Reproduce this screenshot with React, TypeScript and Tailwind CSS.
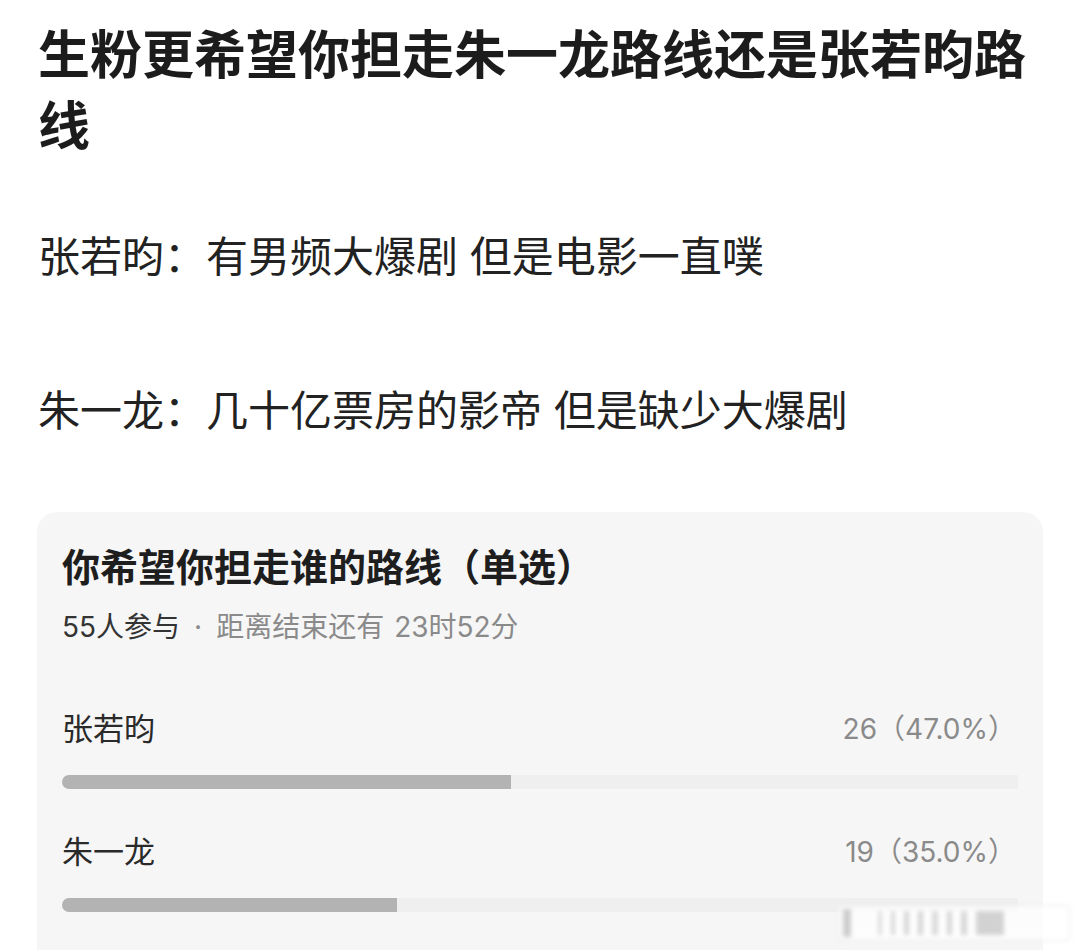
const options = [
  { name: "张若昀", votes: 26, pct: 47.0 },
  { name: "朱一龙", votes: 19, pct: 35.0 },
];

export default function App() {
  return (
    <div
      className="relative min-h-screen bg-white px-[38px] pt-[20px] pb-[40px] text-[#222]"
      style={{ fontFamily: 'Inter, "Noto Sans CJK SC", "Noto Sans", sans-serif' }}
    >
      {/* 标题 */}
      <h1 className="text-[52px] leading-[71px] font-bold text-[#1c1c1c]">
        生粉更希望你担走朱一龙路线还是张若昀路线
      </h1>

      {/* 正文 */}
      <div className="mt-[56px] text-[42px] leading-[77px] text-[#222]">
        <p>张若昀：有男频大爆剧 但是电影一直噗</p>
        <p>&nbsp;</p>
        <p>朱一龙：几十亿票房的影帝 但是缺少大爆剧</p>
      </div>

      {/* 投票卡片 */}
      <div className="mt-[63px] -mx-[1px] rounded-[20px] bg-[#f6f6f6] px-[25px] pt-[28px] pb-[60px]">
        <h2 className="text-[38px] leading-[54px] font-bold text-[#1e1e1e]">
          你希望你担走谁的路线（单选）
        </h2>
        <p className="mt-[15px] text-[28px] leading-[36px] text-[#8a8a8a]">
          <span className="text-[#333]">55人参与</span>
          <span className="mx-[14px]">·</span>
          距离结束还有<span className="ml-[10px]">23时52分</span>
        </p>

        <div className="mt-[64px] flex flex-col gap-[43px]">
          {options.map((o) => (
            <div key={o.name}>
              <div className="flex items-center justify-between text-[31px] leading-[40px]">
                <span className="text-[#2a2a2a]">{o.name}</span>
                <span className="pr-[2px] text-[28px] text-[#8a8a8a]">
                  {o.votes}（{o.pct.toFixed(1)}%）
                </span>
              </div>
              <div className="mt-[26px] h-[14px] w-full overflow-hidden rounded-l-[7px] bg-[#efefef]">
                <div className="h-full bg-[#b3b3b3]" style={{ width: `${o.pct}%` }} />
              </div>
            </div>
          ))}
        </div>
      </div>

      {/* 水印 */}
      <div className="pointer-events-none absolute top-[905px] left-[838px] flex h-[36px] w-[232px] items-center gap-[9px] rounded-[3px] border border-[#e8e8e8] bg-white/70 px-[4px] blur-[2px]">
        <div className="h-[28px] w-[8px] bg-[#cccccc]" />
        <div className="ml-[18px] h-[24px] w-[4px] bg-[#dddddd]" />
        <div className="h-[24px] w-[4px] bg-[#d8d8d8]" />
        <div className="h-[24px] w-[5px] bg-[#d6d6d6]" />
        <div className="h-[24px] w-[5px] bg-[#d4d4d4]" />
        <div className="h-[24px] w-[6px] bg-[#dadada]" />
        <div className="h-[24px] w-[5px] bg-[#d6d6d6]" />
        <div className="h-[24px] w-[6px] bg-[#d6d6d6]" />
        <div className="h-[24px] w-[28px] bg-[#d2d2d2]" />
      </div>
    </div>
  );
}
